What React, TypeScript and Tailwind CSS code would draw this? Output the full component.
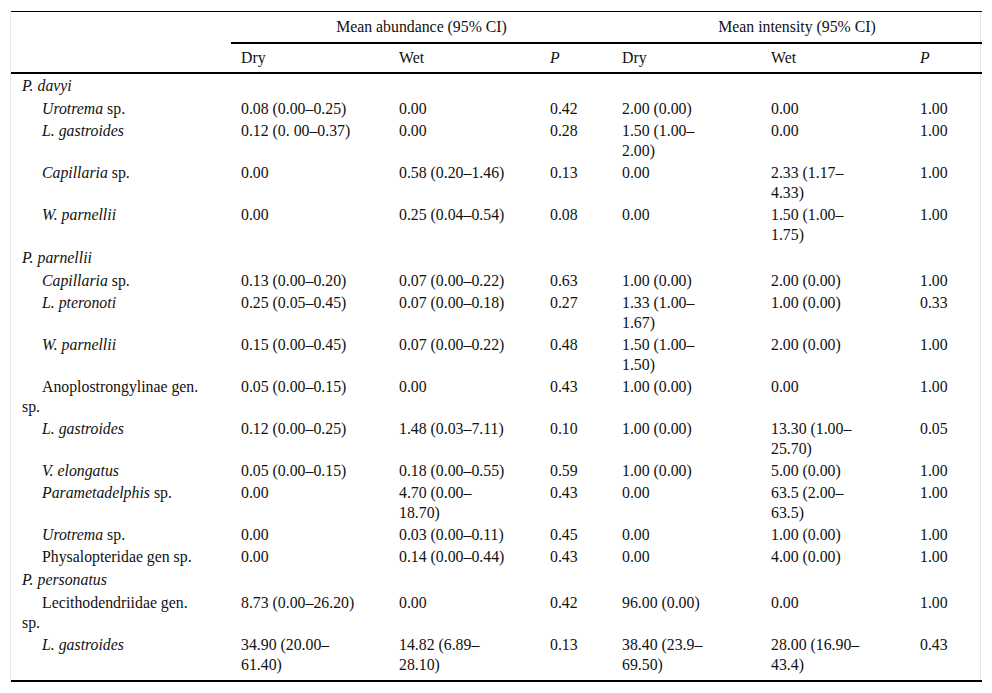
import React from "react";

type Row =
  | { kind: "group"; label: string }
  | { kind: "item"; label: React.ReactNode; cells: string[] };

const I = ({ children }: { children: React.ReactNode }) => <i>{children}</i>;

const rows: Row[] = [
  { kind: "group", label: "P. davyi" },
  { kind: "item", label: <><I>Urotrema</I> sp.</>, cells: ["0.08 (0.00–0.25)", "0.00", "0.42", "2.00 (0.00)", "0.00", "1.00"] },
  { kind: "item", label: <I>L. gastroides</I>, cells: ["0.12 (0. 00–0.37)", "0.00", "0.28", "1.50 (1.00–|2.00)", "0.00", "1.00"] },
  { kind: "item", label: <><I>Capillaria</I> sp.</>, cells: ["0.00", "0.58 (0.20–1.46)", "0.13", "0.00", "2.33 (1.17–|4.33)", "1.00"] },
  { kind: "item", label: <I>W. parnellii</I>, cells: ["0.00", "0.25 (0.04–0.54)", "0.08", "0.00", "1.50 (1.00–|1.75)", "1.00"] },
  { kind: "group", label: "P. parnellii" },
  { kind: "item", label: <><I>Capillaria</I> sp.</>, cells: ["0.13 (0.00–0.20)", "0.07 (0.00–0.22)", "0.63", "1.00 (0.00)", "2.00 (0.00)", "1.00"] },
  { kind: "item", label: <I>L. pteronoti</I>, cells: ["0.25 (0.05–0.45)", "0.07 (0.00–0.18)", "0.27", "1.33 (1.00–|1.67)", "1.00 (0.00)", "0.33"] },
  { kind: "item", label: <I>W. parnellii</I>, cells: ["0.15 (0.00–0.45)", "0.07 (0.00–0.22)", "0.48", "1.50 (1.00–|1.50)", "2.00 (0.00)", "1.00"] },
  { kind: "item", label: <>Anoplostrongylinae gen.<br />sp.</>, cells: ["0.05 (0.00–0.15)", "0.00", "0.43", "1.00 (0.00)", "0.00", "1.00"] },
  { kind: "item", label: <I>L. gastroides</I>, cells: ["0.12 (0.00–0.25)", "1.48 (0.03–7.11)", "0.10", "1.00 (0.00)", "13.30 (1.00–|25.70)", "0.05"] },
  { kind: "item", label: <I>V. elongatus</I>, cells: ["0.05 (0.00–0.15)", "0.18 (0.00–0.55)", "0.59", "1.00 (0.00)", "5.00 (0.00)", "1.00"] },
  { kind: "item", label: <><I>Parametadelphis</I> sp.</>, cells: ["0.00", "4.70 (0.00–|18.70)", "0.43", "0.00", "63.5 (2.00–|63.5)", "1.00"] },
  { kind: "item", label: <><I>Urotrema</I> sp.</>, cells: ["0.00", "0.03 (0.00–0.11)", "0.45", "0.00", "1.00 (0.00)", "1.00"] },
  { kind: "item", label: <>Physalopteridae gen sp.</>, cells: ["0.00", "0.14 (0.00–0.44)", "0.43", "0.00", "4.00 (0.00)", "1.00"] },
  { kind: "group", label: "P. personatus" },
  { kind: "item", label: <>Lecithodendriidae gen.<br />sp.</>, cells: ["8.73 (0.00–26.20)", "0.00", "0.42", "96.00 (0.00)", "0.00", "1.00"] },
  { kind: "item", label: <I>L. gastroides</I>, cells: ["34.90 (20.00–|61.40)", "14.82 (6.89–|28.10)", "0.13", "38.40 (23.9–|69.50)", "28.00 (16.90–|43.4)", "0.43"] },
];

function Cell({ text }: { text: string }) {
  const parts = text.split("|");
  return (
    <>
      {parts.map((p, i) => (
        <React.Fragment key={i}>
          {i > 0 && <br />}
          {p}
        </React.Fragment>
      ))}
    </>
  );
}

export default function App() {
  return (
    <div className="bg-white w-[992px] h-[693px] pt-[11px] pl-[10px]" style={{ fontFamily: '"Liberation Serif", "Times New Roman", serif' }}>
      <div className="w-[971px] border-x border-[#e6e6e6]">
        <table className="table-fixed border-collapse w-[971px] text-[15.8px] leading-[20px] text-[#111]">
          <colgroup>
            <col className="w-[220px]" />
            <col className="w-[158px]" />
            <col className="w-[151px]" />
            <col className="w-[72px]" />
            <col className="w-[149px]" />
            <col className="w-[149px]" />
            <col className="w-[72px]" />
          </colgroup>
          <thead>
            <tr className="border-t border-black">
              <th className="h-[31px] p-0"></th>
              <th colSpan={3} className="h-[31px] p-0 font-normal text-center align-middle border-b-2 border-black">
                Mean abundance (95% CI)
              </th>
              <th colSpan={3} className="h-[31px] p-0 font-normal text-center align-middle border-b-2 border-black">
                Mean intensity (95% CI)
              </th>
            </tr>
            <tr className="border-b-2 border-black">
              <th className="h-[30px] p-0"></th>
              <th className="h-[30px] pl-[10px] font-normal text-left align-middle">Dry</th>
              <th className="h-[30px] pl-[10px] font-normal text-left align-middle">Wet</th>
              <th className="h-[30px] pl-[10px] font-normal text-left align-middle italic">P</th>
              <th className="h-[30px] pl-[10px] font-normal text-left align-middle">Dry</th>
              <th className="h-[30px] pl-[10px] font-normal text-left align-middle">Wet</th>
              <th className="h-[30px] pl-[10px] font-normal text-left align-middle italic">P</th>
            </tr>
          </thead>
          <tbody className="border-b-2 border-black">
            {rows.map((r, idx) => {
              const last = idx === rows.length - 1;
              if (r.kind === "group") {
                return (
                  <tr key={idx}>
                    <td colSpan={7} className="pl-[11px] py-[2px] italic align-top">
                      {r.label}
                    </td>
                  </tr>
                );
              }
              const pad = last ? "pt-px pb-[5px]" : "py-px";
              return (
                <tr key={idx}>
                  <td className={`pl-[11px] pr-[4px] ${pad} align-top indent-[20px]`}>{r.label}</td>
                  {r.cells.map((c, j) => (
                    <td key={j} className={`pl-[10px] pr-0 ${pad} align-top whitespace-nowrap`}>
                      <Cell text={c} />
                    </td>
                  ))}
                </tr>
              );
            })}
          </tbody>
        </table>
      </div>
    </div>
  );
}
